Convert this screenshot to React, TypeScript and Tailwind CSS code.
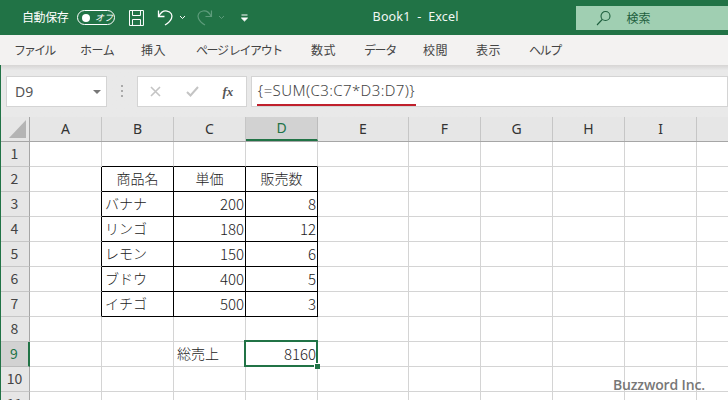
import React from "react";

const jp = "font-['Noto_Sans_CJK_JP','Noto_Sans',sans-serif]";

const menus: [string, string][] = [
  ["ファイル", "w-[38px] ml-[14px] tracking-[-1.9px]"],
  ["ホーム", "w-[34px] ml-[28px] tracking-[-0.4px]"],
  ["挿入", "w-[25px] ml-[27px] tracking-[0.4px]"],
  ["ページ レイアウト", "w-[86px] ml-[30px] tracking-[-1.4px]"],
  ["数式", "w-[26px] ml-[29px] tracking-[0.6px]"],
  ["データ", "w-[32px] ml-[27px] tracking-[-1.4px]"],
  ["校閲", "w-[25px] ml-[27px] tracking-[0.4px]"],
  ["表示", "w-[26px] ml-[28px] tracking-[0.4px]"],
  ["ヘルプ", "w-[32px] ml-[27px] tracking-[-1.4px]"],
];

const colHeads: [string, string][] = [
  ["A", "w-[72px]"],
  ["B", "w-[72px]"],
  ["C", "w-[72px]"],
  ["D", "w-[72px]"],
  ["E", "w-[91px]"],
  ["F", "w-[72px]"],
  ["G", "w-[72px]"],
  ["H", "w-[72px]"],
  ["I", "w-[72px]"],
  ["", "w-[40px]"],
];

type Cell = { t?: string; a?: "l" | "r" | "c"; r?: boolean; b?: boolean };

const table: Record<string, string[]> = {
  "2": ["商品名", "単価", "販売数"],
  "3": ["バナナ", "200", "8"],
  "4": ["リンゴ", "180", "12"],
  "5": ["レモン", "150", "6"],
  "6": ["ブドウ", "400", "5"],
  "7": ["イチゴ", "500", "3"],
};

function cellFor(row: number, col: number): Cell {
  const c: Cell = {};
  const inTableRow = row >= 2 && row <= 7;
  if (inTableRow && col >= 0 && col <= 3) c.r = true;
  if (row >= 1 && row <= 7 && col >= 1 && col <= 3) c.b = true;
  if (inTableRow && col >= 1 && col <= 3) {
    c.t = table[String(row)][col - 1];
    if (row === 2) c.a = "c";
    else c.a = col === 1 ? "l" : "r";
  }
  if (row === 9 && col === 2) {
    c.t = "総売上";
    c.a = "l";
  }
  if (row === 9 && col === 3) {
    c.t = "8160";
    c.a = "r";
  }
  return c;
}

function GridCell({ row, col, width }: { row: number; col: number; width: string }) {
  const c = cellFor(row, col);
  const isSel = row === 9 && col === 3;
  return (
    <div
      className={`relative h-[25px] shrink-0 flex items-center border-r border-b box-border pb-[2px] font-light text-[#222] ${width} ${
        c.r ? "border-r-black" : "border-r-[#d4d4d4]"
      } ${c.b ? "border-b-black" : "border-b-[#d4d4d4]"} ${
        c.a === "c"
          ? "justify-center text-[14px]"
          : c.a === "r"
            ? "justify-end pr-[1px] text-[15px]"
            : "justify-start pl-[3px] text-[14px]"
      } ${isSel ? "z-10" : ""}`}
    >
      {c.t && <span className="leading-none">{c.t}</span>}
      {isSel && (
        <div className="absolute left-[-2px] top-[-2px] w-[74px] h-[27px] border-2 border-[#217346]">
          <div className="absolute right-[-4px] bottom-[-4px] w-[5px] h-[5px] bg-[#217346] border-l border-t border-white box-content" />
        </div>
      )}
    </div>
  );
}

function Row({ n }: { n: number }) {
  const sel = n === 9;
  return (
    <div className="flex h-[25px]">
      <div
        className={`w-[30px] shrink-0 h-[25px] flex items-center justify-center pb-[2px] text-[14px] box-border border-b ${
          sel
            ? "bg-[#d2d2d2] text-[#217346] border-r-2 border-r-[#217346] border-b-[#bcbcbc]"
            : "bg-[#e6e6e6] text-[#444] border-r border-r-[#a6a6a6] border-b-[#c6c6c6]"
        }`}
      >
        {n}
      </div>
      {colHeads.map(([, w], i) => (
        <GridCell key={i} row={n} col={i} width={w} />
      ))}
    </div>
  );
}

export default function App() {
  return (
    <div className={`relative w-[728px] h-[400px] overflow-hidden bg-white ${jp}`}>
      {/* Title bar */}
      <div className="h-[35px] bg-[#217346] flex items-center text-white">
        <span className="ml-[22px] w-[48px] text-[12px] pb-[1px] whitespace-nowrap tracking-[-0.4px]">自動保存</span>
        <div className="ml-[7px] w-[38px] h-[15px] rounded-full border border-white flex items-center pl-[4px] gap-[5px]">
          <div className="w-[8px] h-[8px] rounded-full bg-white" />
          <span className="text-[9px] italic leading-none">オフ</span>
        </div>
        <svg className="ml-[13px]" width="17" height="18" viewBox="0 0 17 18" fill="none" stroke="#fff" strokeWidth="1">
          <path d="M1.5 1.5h14v15h-14z" />
          <path d="M4.5 1.5v5h8v-5" />
          <path d="M4.5 16.5v-6h8v6" />
        </svg>
        <svg className="ml-[12px]" width="17" height="18" viewBox="0 0 17 18" fill="none" stroke="#fff" strokeWidth="1.3">
          <path d="M1.5 1.5v6h6" />
          <path d="M2 7C4 3 7 1.5 10 2c4 .7 6 4 4.5 7.5-1 2.5-4 5-6.5 6.5" />
        </svg>
        <svg className="ml-[5px]" width="7" height="5" viewBox="0 0 7 5" fill="none" stroke="#fff" strokeWidth="1">
          <path d="M1 1l2.5 2.5L6 1" />
        </svg>
        <svg className="ml-[10px]" width="17" height="18" viewBox="0 0 17 18" fill="none" stroke="#5d9c7b" strokeWidth="1.2">
          <path d="M15.5 1.5v6h-6" />
          <path d="M15 7C13 3 10 1.5 7 2c-4 .7-6 4-4.5 7.5 1 2.5 4 5 6.5 6.5" />
        </svg>
        <svg className="ml-[5px]" width="7" height="5" viewBox="0 0 7 5" fill="none" stroke="#5d9c7b" strokeWidth="1">
          <path d="M1 1l2.5 2.5L6 1" />
        </svg>
        <svg className="ml-[16px]" width="7" height="8" viewBox="0 0 7 8" fill="none" stroke="#fff" strokeWidth="1">
          <path d="M0.5 1h6" />
          <path d="M0.5 4l3 3 3-3z" fill="#fff" />
        </svg>
        <span className="ml-[125px] w-[90px] font-['Noto_Sans',sans-serif] text-[12.5px] tracking-[0.15px] whitespace-pre text-[#f3f8f5]">Book1  -  Excel</span>
        <div className="ml-[114px] w-[152px] h-[24px] bg-[#a0cfb2] flex items-center text-[#1e5f3e]">
          <svg className="ml-[20px]" width="15" height="16" viewBox="0 0 15 16" fill="none" stroke="#1e5f3e" strokeWidth="1.1">
            <circle cx="9.5" cy="6" r="4.5" />
            <path d="M6.2 9.5L1 15" />
          </svg>
          <span className="ml-[15px] text-[12px]">検索</span>
        </div>
      </div>

      {/* Menu */}
      <div className="h-[30px] bg-[#f3f2f1] flex items-center text-[12px] text-[#444] pb-[1px]">
        {menus.map(([m, c]) => (
          <span key={m} className={`${c} shrink-0 whitespace-nowrap`}>
            {m}
          </span>
        ))}
      </div>

      {/* Formula zone */}
      <div className="h-[52px] pt-[11px] pl-[6px] flex items-start relative bg-gradient-to-b from-[#d6d5d4] from-0% to-[#e9e9e9] to-[10%]">
        <div className="w-[102px] h-[31px] bg-white border border-[#d4d4d4] flex items-center justify-between pl-[8px] pr-[5px] text-[14px] text-[#555] font-['Noto_Sans',sans-serif]">
          D9
          <div className="w-0 h-0 border-l-[4px] border-r-[4px] border-t-[4px] border-l-transparent border-r-transparent border-t-[#777]" />
        </div>
        <div className="ml-[14px] mt-[9px] w-[2px] flex flex-col gap-[3px]">
          <div className="w-[2px] h-[2px] bg-[#aaa]" />
          <div className="w-[2px] h-[2px] bg-[#aaa]" />
          <div className="w-[2px] h-[2px] bg-[#aaa]" />
        </div>
        <div className="ml-[14px] w-[110px] h-[31px] bg-white border border-[#d4d4d4] flex items-center text-[#c0c0c0]">
          <svg className="ml-[12px]" width="11" height="11" viewBox="0 0 11 11" stroke="#c4c4c4" strokeWidth="1.6">
            <path d="M1 1l9 9M10 1l-9 9" />
          </svg>
          <svg className="ml-[25px]" width="13" height="11" viewBox="0 0 13 11" fill="none" stroke="#c4c4c4" strokeWidth="2">
            <path d="M1 6l3.5 3.5L12 1" />
          </svg>
          <span className="ml-[23px] font-['Liberation_Serif',serif] italic font-bold text-[13px] text-[#555]">fx</span>
        </div>
        <div className="ml-[4px] w-[480px] h-[31px] bg-white border border-[#d4d4d4] flex items-center pl-[6px] pb-[3px] text-[15px] font-light tracking-[0.4px] text-[#444] font-['Noto_Sans',sans-serif] whitespace-nowrap">
          {"{=SUM(C3:C7*D3:D7)}"}
        </div>
        <div className="absolute left-[257px] top-[39px] w-[159px] h-[2px] bg-[#c0202c]" />
      </div>

      {/* Column header */}
      <div className="flex h-[24px] bg-[#e6e6e6] border-b border-b-[#a6a6a6] box-content">
        <div className="w-[30px] shrink-0 h-[24px] border-r border-r-[#a6a6a6] flex items-end justify-end pr-[3px] pb-[3px] box-border">
          <div className="w-0 h-0 border-l-[17px] border-b-[18px] border-l-transparent border-b-[#b4b4b4]" />
        </div>
        {colHeads.map(([l, w], i) => (
          <div
            key={i}
            className={`${w} shrink-0 h-[24px] box-border flex items-center justify-center pb-[1px] text-[14px] font-['Noto_Sans',sans-serif] border-r ${
              l === "D"
                ? "bg-[#d2d2d2] text-[#217346] border-b-2 border-b-[#217346] border-r-[#bcbcbc]"
                : "text-[#333] border-r-[#c6c6c6]"
            }`}
          >
            {l}
          </div>
        ))}
      </div>

      {/* Rows */}
      <div className="relative">
        {[1, 2, 3, 4, 5, 6, 7, 8, 9, 10, 11].map((n) => (
          <Row key={n} n={n} />
        ))}
      </div>

      {/* Window edge */}
      <div className="absolute left-0 top-[65px] bottom-0 w-[1px] bg-[#217346]" />

      {/* Watermark */}
      <div className="absolute z-20 left-[613px] top-[375px] text-[14px] font-semibold tracking-[-0.15px] font-['Open_Sans',sans-serif] text-[#777] whitespace-nowrap leading-[20px]">
        Buzzword Inc.
      </div>
    </div>
  );
}
